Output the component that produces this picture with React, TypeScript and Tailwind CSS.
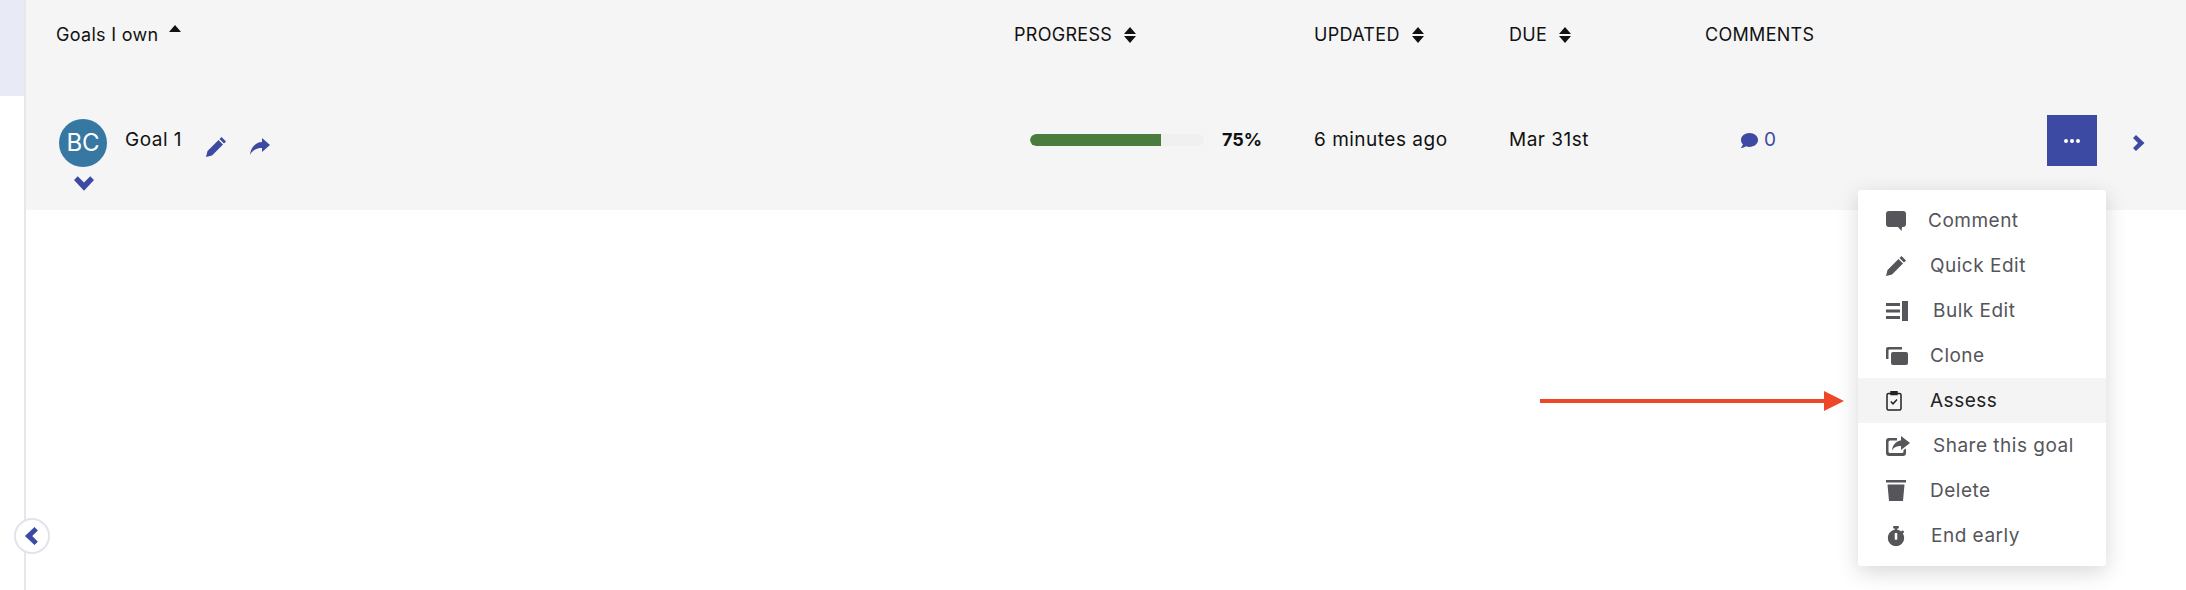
import { FaComment, FaStopwatch } from "react-icons/fa";
import type { ReactNode } from "react";

const BLUE = "fill-[#3d4aa3]";
const GREY = "fill-[#55555a]";

function SortIcon() {
  return (
    <svg width="12" height="16" viewBox="0 0 12 16" className="fill-[#111]">
      <path d="M6 0 12 7H0zM0 9h12l-6 7z" />
    </svg>
  );
}

// thick chevron, points right by default
function Chevron({ size, rotate }: { size: number; rotate?: string }) {
  return (
    <svg width={size} height={size} viewBox="0 0 16 16" className={`${BLUE} ${rotate ?? ""}`}>
      <path d="M4 0 12.500 8 4 16 1 13l5-5-5-5z" />
    </svg>
  );
}

function PencilIcon({ className }: { className: string }) {
  return (
    <svg width="20" height="20" viewBox="0 0 20 20" className={className}>
      <path d="M15.500 0 20 4.500 18 6.500 13.500 2zM12.500 3 17 7.500 6 18.500 0 20 1.500 14z" />
    </svg>
  );
}

function ShareArrowIcon({ className }: { className: string }) {
  return (
    <svg width="20" height="17" viewBox="0 0 20 17" className={className}>
      <path d="M12 0 20 7 12 14V10C7 10 3 11.500 0 17 .5 10 5 4.500 12 4z" />
    </svg>
  );
}

function CommentIcon() {
  return (
    <svg width="20" height="20" viewBox="0 0 20 20" className={GREY}>
      <path d="M3 0h14a3 3 0 0 1 3 3v10a3 3 0 0 1-3 3h-1l-.5 4-3.500-4H3a3 3 0 0 1-3-3V3a3 3 0 0 1 3-3z" />
    </svg>
  );
}

function BulkIcon() {
  return (
    <svg width="22" height="20" viewBox="0 0 22 20" className={GREY}>
      <path d="M0 2h14v3H0zM0 8.500h14v3H0zM0 15h14v3H0zM16 0h6v20h-6z" />
    </svg>
  );
}

function CloneIcon() {
  return (
    <svg width="22" height="18" viewBox="0 0 22 18" className={GREY}>
      <path d="M2 0h14v2.500H3.500a1 1 0 0 0-1 1V12H0V2a2 2 0 0 1 2-2z" />
      <rect x="5" y="5" width="17" height="13" rx="2" />
    </svg>
  );
}

function AssessIcon() {
  return (
    <svg width="16" height="20" viewBox="0 0 16 20" fill="none" stroke="#222" strokeWidth="1.500">
      <rect x="1" y="2.500" width="14" height="16.500" rx="1.500" />
      <rect x="5" y="0.500" width="6" height="3" fill="#222" />
      <path d="M4.800 10.500 7 12.800l4-4.300" />
    </svg>
  );
}

function ShareBoxIcon() {
  return (
    <svg width="24" height="21" viewBox="0 0 24 21" className={GREY}>
      <path d="M15 1 24 8 15 15V11C11 11 8 12 6 15.500 6.500 10 10 6 15 5.500z" />
      <path d="M3 3h8v2.500H4a1.500 1.500 0 0 0-1.500 1.500v9.500A1.500 1.500 0 0 0 4 18h12a1.500 1.500 0 0 0 1.500-1.500V15L20 13.500V18a3 3 0 0 1-3 3H3a3 3 0 0 1-3-3V6a3 3 0 0 1 3-3z" />
    </svg>
  );
}

function TrashIcon() {
  return (
    <svg width="20" height="21" viewBox="0 0 20 21" className={GREY}>
      <path d="M0 0h20v2.500H0zM1.500 4.500h17L17 21H3z" />
    </svg>
  );
}

type MenuItem = { label: string; icon: ReactNode; gap: string; active?: boolean };

const MENU: MenuItem[] = [
  { label: "Comment", icon: <CommentIcon />, gap: "pl-[40px]" },
  { label: "Quick Edit", icon: <PencilIcon className={GREY} />, gap: "pl-[42px]" },
  { label: "Bulk Edit", icon: <BulkIcon />, gap: "pl-[45px]" },
  { label: "Clone", icon: <CloneIcon />, gap: "pl-[42px]" },
  { label: "Assess", icon: <AssessIcon />, gap: "pl-[42px]", active: true },
  { label: "Share this goal", icon: <ShareBoxIcon />, gap: "pl-[45px]" },
  { label: "Delete", icon: <TrashIcon />, gap: "pl-[42px]" },
  { label: "End early", icon: <FaStopwatch size={20} color="#55555a" />, gap: "pl-[43px]" },
];

function ActionsMenu() {
  return (
    <div className="absolute left-[1832px] top-[190px] w-[248px] rounded-[3px] bg-white py-2 shadow-[0_6px_22px_rgba(0,0,0,0.16)]">
      {MENU.map((item) => (
        <div
          key={item.label}
          className={`relative flex h-[45px] items-center text-[19px] tracking-[0.5px] ${
            item.active ? "bg-[#f4f4f4] text-[#222]" : "text-[#55555a]"
          }`}
        >
          <span className="absolute left-[28px] flex h-[24px] w-[26px] items-center">{item.icon}</span>
          <span className={`${item.gap} ml-[30px] pt-[2px]`}>{item.label}</span>
        </div>
      ))}
    </div>
  );
}

export default function App() {
  return (
    <div className="relative flex h-[590px] w-[2186px] overflow-hidden bg-white font-['Inter','Liberation_Sans',sans-serif] text-[19px] tracking-[0.5px] text-[#111]">
      {/* Left rail */}
      <div className="w-[26px] shrink-0 border-r-2 border-[#e6e6ec]">
        <div className="h-[96px] bg-[#e8eaf6]" />
      </div>

      <div className="relative flex-1">
        {/* Header row */}
        <div className="flex h-[96px] items-start bg-[#f5f5f5] pt-[21px] text-[18px] tracking-[0.3px]">
          <div className="flex w-[988px] items-center pl-[30px]">
            Goals I own
            <svg width="12" height="7" viewBox="0 0 12 7" className="mb-[12px] ml-[11px] fill-[#111]">
              <path d="M6 0 12 7H0z" />
            </svg>
          </div>
          <div className="flex w-[300px] items-center gap-3">PROGRESS <SortIcon /></div>
          <div className="flex w-[195px] items-center gap-3">UPDATED <SortIcon /></div>
          <div className="flex w-[196px] items-center gap-3">DUE <SortIcon /></div>
          <div>COMMENTS</div>
        </div>

        {/* Goal row */}
        <div className="flex h-[114px] items-start bg-[#f5f5f5]">
          <div className="flex w-[1004px] pl-[33px]">
            <div className="flex w-[48px] flex-col items-center pt-[23px]">
              <div className="flex h-[48px] w-[48px] items-center justify-center rounded-full bg-[#3778a3] text-[24px] tracking-normal text-white">
                BC
              </div>
              <span className="ml-[2px] mt-[8px] flex h-[22px]">
                <Chevron size={20} rotate="rotate-90" />
              </span>
            </div>
            <div className="ml-[18px] pt-[30px]">Goal 1</div>
            <PencilIcon className={`ml-[24px] mt-[41px] ${BLUE}`} />
            <ShareArrowIcon className={`ml-[24px] mt-[42px] ${BLUE}`} />
          </div>
          <div className="flex w-[284px] items-center pt-[30px]">
            <div className="relative h-[12px] w-[174px] overflow-hidden rounded-full bg-[#f0f0f1]">
              <div className="h-full rounded-l-full bg-[#4a7c3e]" style={{ width: "75%" }} />
            </div>
            <span className="ml-[18px] text-[18px] font-bold tracking-normal">75%</span>
          </div>
          <div className="w-[195px] pt-[30px]">6 minutes ago</div>
          <div className="w-[232px] pt-[30px]">Mar 31st</div>
          <div className="flex w-[306px] items-center gap-[6px] pt-[30px] text-[#3d4aa3]">
            <FaComment size={17} />
            0
          </div>
          <div className="mt-[19px] flex h-[51px] w-[50px] items-center justify-center bg-[#3d4aa3]">
            <div className="flex gap-[2px]">
              <span className="h-[4px] w-[4px] rounded-full bg-white" />
              <span className="h-[4px] w-[4px] rounded-full bg-white" />
              <span className="h-[4px] w-[4px] rounded-full bg-white" />
            </div>
          </div>
          <span className="ml-[35px] mt-[39px] flex">
            <Chevron size={16} />
          </span>
        </div>

        <ActionsMenu />

        {/* Annotation arrow */}
        <div className="absolute left-[1514px] top-[391px] flex items-center">
          <div className="h-[4px] w-[284px] bg-[#ee4627]" />
          <div className="h-0 w-0 border-y-[10px] border-l-[20px] border-y-transparent border-l-[#ee4627]" />
        </div>
      </div>

      {/* Collapse sidebar button */}
      <div className="absolute left-[14px] top-[518px] flex h-[36px] w-[36px] items-center justify-center rounded-full border-2 border-[#e3e3ec] bg-white">
        <span className="mr-[5px] flex">
          <Chevron size={18} rotate="rotate-180" />
        </span>
      </div>
    </div>
  );
}
